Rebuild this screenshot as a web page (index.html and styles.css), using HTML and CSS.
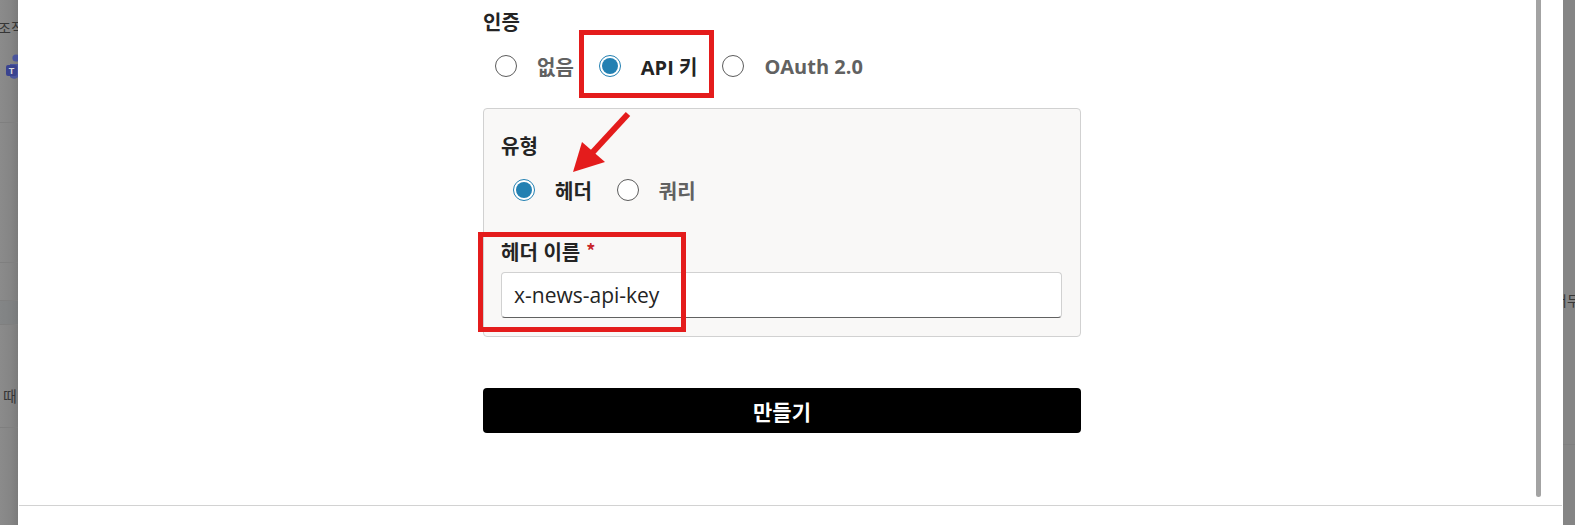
FILE: index.html
```html
<!DOCTYPE html>
<html lang="ko">
<head>
<meta charset="utf-8">
<title>API 만들기</title>
<link rel="stylesheet" href="styles.css">
</head>
<body>
<div class="screen">
  <div class="backdrop left">
    <div class="bd-row r1">
      <span class="bd-text top">조직</span>
      <svg class="teams" width="14" height="30" viewBox="0 0 14 30">
        <circle cx="10" cy="4" r="3.6" fill="#4a559d"/>
        <path d="M4 10 h9 a1 1 0 0 1 1 1 v9 a6 6 0 0 1 -10 3 z" fill="#4a559d"/>
        <rect x="0" y="11" width="11" height="11" rx="2" fill="#3a438f"/>
        <text x="5.5" y="20" font-size="9" font-family="Liberation Sans, sans-serif" font-weight="700" fill="#dcdcdc" text-anchor="middle">T</text>
      </svg>
    </div>
    <div class="bd-row r2"></div>
    <div class="bd-row r3"></div>
    <div class="bd-row r4"></div>
    <div class="bd-row r5"><span class="bd-text mid">때</span></div>
    <div class="bd-row r6"></div>
  </div>

  <div class="modal">
    <div class="modal-body">
      <div class="form">
        <div class="field-label">인증</div>
        <div class="radio-row">
          <label class="option"><span class="radio"></span><span>없음</span></label>
          <label class="option checked"><span class="radio"></span><span>API 키</span></label>
          <label class="option"><span class="radio"></span><span>OAuth 2.0</span></label>
        </div>

        <div class="panel">
          <div class="field-label">유형</div>
          <div class="radio-row">
            <label class="option checked"><span class="radio"></span><span>헤더</span></label>
            <label class="option"><span class="radio"></span><span>쿼리</span></label>
          </div>
          <div class="field-label name-label">헤더 이름<span class="req">*</span></div>
          <input class="text-input" type="text" value="x-news-api-key">
        </div>

        <button class="submit" type="button">만들기</button>
      </div>

      <div class="scrollbar"></div>
      <div class="highlight hl-key"></div>
      <div class="highlight hl-name"></div>
      <svg class="arrow" width="90" height="75" viewBox="0 0 90 75">
        <line x1="86" y1="9" x2="50" y2="48" stroke="#e41c1c" stroke-width="6"/>
        <polygon points="31,67 40,37 63,57" fill="#e41c1c"/>
      </svg>
    </div>
    <div class="modal-footer"></div>
  </div>

  <div class="backdrop right">
    <div class="bd-row rr1"></div>
    <div class="bd-row rr2"><span class="bd-text side">어무</span></div>
    <div class="bd-row rr3"></div>
  </div>
</div>
</body>
</html>
```

FILE: styles.css
```css
html, body {
  margin: 0;
  padding: 0;
}

body {
  width: 1575px;
  height: 525px;
  overflow: hidden;
  font-family: "Open Sans", "Noto Sans CJK KR", sans-serif;
  background: #868686;
}

.screen {
  display: flex;
  height: 525px;
}

/* ---------- dimmed page behind the dialog ---------- */
.backdrop {
  flex: none;
  overflow: hidden;
  display: flex;
  flex-direction: column;
}

.backdrop.left {
  width: 18px;
  background: linear-gradient(to right, #8b8b8b, #858585 60%, #7b7b7b);
}

.backdrop.right {
  width: 12px;
  background: #858585;
}

.bd-row {
  flex: none;
  border-bottom: 1px solid #7f7f7f;
  box-sizing: border-box;
}

.r1 { height: 123px; display: flex; flex-direction: column; }
.r2 { height: 140px; }
.r3 { height: 38px; }
.r4 { height: 24px; background: rgba(110, 118, 124, 0.25); }
.r5 { height: 103px; display: flex; align-items: center; }
.r6 { flex: 1; border-bottom: none; }

.rr1 { height: 283px; border-bottom: none; }
.rr2 { height: 162px; display: flex; align-items: flex-start; }
.rr3 { flex: 1; border-bottom: none; }

.bd-text {
  font-family: "Noto Sans CJK KR", sans-serif;
  font-size: 14px;
  line-height: 18px;
  color: #363636;
  white-space: nowrap;
}

.bd-text.top {
  margin: 18px 0 0 -2px;
}

.bd-text.mid {
  margin: 40px 0 0 3px;
  font-size: 15px;
}

.bd-text.side {
  margin: 8px 0 0 -9px;
}

.teams {
  margin: 18px 0 0 6px;
}

/* ---------- dialog ---------- */
.modal {
  width: 1545px;
  flex: none;
  background: #ffffff;
  display: flex;
  flex-direction: column;
}

.modal-body {
  position: relative;
  height: 505px;
  flex: none;
}

.modal-footer {
  flex: 1;
  margin: 0 1px;
  border-top: 1px solid #d2d2d2;
}

.form {
  margin-left: 465px;
  width: 598px;
  padding-top: 9px;
}

.field-label {
  font-family: "Noto Sans CJK KR", sans-serif;
  font-size: 20px;
  font-weight: 700;
  line-height: 26px;
  color: #242424;
}

.req {
  color: #c8262b;
  font-size: 18px;
  margin-left: 6px;
  position: relative;
  top: -2px;
}

.radio-row {
  display: flex;
  align-items: center;
  gap: 25px;
  height: 32px;
  margin-top: 15px;
  padding-left: 12px;
}

.option {
  display: flex;
  align-items: center;
  gap: 20px;
  font-size: 20px;
  font-weight: 700;
  color: #616161;
  white-space: nowrap;
}

.option.checked {
  color: #242424;
}

.radio {
  width: 22px;
  height: 22px;
  box-sizing: border-box;
  border: 1px solid #5c5c5c;
  border-radius: 50%;
  background: #ffffff;
  display: flex;
  align-items: center;
  justify-content: center;
}

.option.checked .radio {
  border-color: #2280b2;
}

.option.checked .radio::after {
  content: "";
  width: 16px;
  height: 16px;
  border-radius: 50%;
  background: #2280b2;
}

.panel {
  margin-top: 26px;
  border: 1px solid #d1d1d1;
  border-radius: 4px;
  background: #f9f8f7;
  padding: 24px 18px 18px 17px;
}

.name-label {
  margin-top: 33px;
}

.text-input {
  display: block;
  width: 100%;
  height: 46px;
  margin-top: 7px;
  box-sizing: border-box;
  border: 1px solid #d1d1d1;
  border-bottom-color: #616161;
  border-radius: 4px;
  background: #ffffff;
  padding: 0 12px;
  font-family: "Open Sans", "Noto Sans CJK KR", sans-serif;
  font-size: 21px;
  color: #242424;
  outline: none;
}

.submit {
  display: block;
  width: 100%;
  height: 45px;
  margin-top: 51px;
  background: #000000;
  color: #ffffff;
  border: none;
  border-radius: 4px;
  font-family: "Noto Sans CJK KR", sans-serif;
  font-size: 21px;
  font-weight: 700;
  cursor: pointer;
}

/* ---------- overlays ---------- */
.scrollbar {
  position: absolute;
  left: 1518px;
  top: 0;
  width: 5px;
  height: 497px;
  background: #a3a3a3;
  border-radius: 0 0 3px 3px;
}

.highlight {
  position: absolute;
  box-sizing: border-box;
  border: 5px solid #e41c1c;
}

.hl-key {
  left: 561px;
  top: 30px;
  width: 135px;
  height: 68px;
}

.hl-name {
  left: 460px;
  top: 232px;
  width: 208px;
  height: 100px;
}

.arrow {
  position: absolute;
  left: 524px;
  top: 105px;
}
```
